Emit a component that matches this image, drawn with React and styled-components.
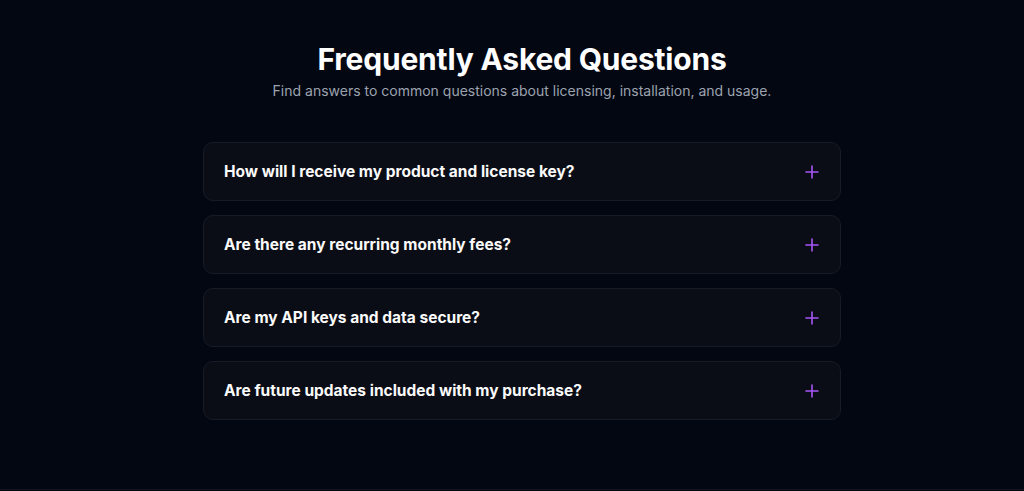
import React from "react";
import styled, { createGlobalStyle } from "styled-components";

const Global = createGlobalStyle`
  html, body { margin: 0; padding: 0; background: #030712; }
  body { font-family: Inter, "Noto Sans", sans-serif; color: #fff; }
`;

const Page = styled.div`
  box-sizing: border-box;
  background: #030712;
  border-bottom: 1px solid #0f1420;
  height: 490px;
`;

const Section = styled.section`
  padding: 41px 0 0 20px;
  display: flex;
  flex-direction: column;
  align-items: center;
`;

const Title = styled.h2`
  margin: 0;
  font-size: 30px;
  line-height: 36px;
  font-weight: 700;
  letter-spacing: -0.2px;
  color: #fff;
`;

const Subtitle = styled.p`
  margin: 4px 0 0;
  font-size: 14px;
  line-height: 20px;
  color: #9ca3af;
`;

const List = styled.div`
  margin-top: 41px;
  width: 638px;
  display: flex;
  flex-direction: column;
  gap: 14px;
`;

const Item = styled.div`
  box-sizing: border-box;
  height: 59px;
  display: flex;
  align-items: center;
  justify-content: space-between;
  padding: 0 21px 0 20px;
  background: #0a0d16;
  border: 1px solid #171b26;
  border-radius: 10px;
`;

const Question = styled.span`
  font-size: 15.5px;
  font-weight: 700;
  color: #fafafa;
`;

const Plus = () => (
  <svg width="14" height="14" viewBox="0 0 14 14" fill="none">
    <path d="M7 1v12M1 7h12" stroke="#a855f7" strokeWidth="1.6" strokeLinecap="round" />
  </svg>
);

const faqs = [
  "How will I receive my product and license key?",
  "Are there any recurring monthly fees?",
  "Are my API keys and data secure?",
  "Are future updates included with my purchase?",
];

export default function App() {
  return (
    <Page>
      <Global />
      <Section>
        <Title>Frequently Asked Questions</Title>
        <Subtitle>Find answers to common questions about licensing, installation, and usage.</Subtitle>
        <List>
          {faqs.map((q) => (
            <Item key={q}>
              <Question>{q}</Question>
              <Plus />
            </Item>
          ))}
        </List>
      </Section>
    </Page>
  );
}
